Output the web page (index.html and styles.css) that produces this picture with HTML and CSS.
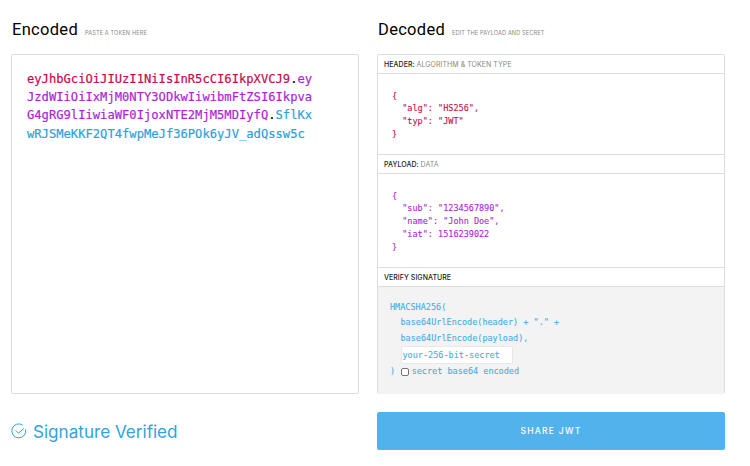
FILE: index.html
```html
<!DOCTYPE html>
<html lang="en">
<head>
<meta charset="utf-8">
<title>JWT Debugger</title>
<link rel="stylesheet" href="styles.css">
</head>
<body>
<main class="grid">
  <section class="col">
    <header class="head"><h2>Encoded</h2><small>PASTE A TOKEN HERE</small></header>
    <div class="box encoded"><span class="red">eyJhbGciOiJIUzI1NiIsInR5cCI6IkpXVCJ9</span>.<span class="purple">eyJzdWIiOiIxMjM0NTY3ODkwIiwibmFtZSI6IkpvaG4gRG9lIiwiaWF0IjoxNTE2MjM5MDIyfQ</span>.<span class="blue">SflKxwRJSMeKKF2QT4fwpMeJf36POk6yJV_adQssw5c</span></div>
  </section>
  <section class="col">
    <header class="head"><h2>Decoded</h2><small>EDIT THE PAYLOAD AND SECRET</small></header>
    <div class="box decoded">
      <div class="label">HEADER: <span>ALGORITHM &amp; TOKEN TYPE</span></div>
      <pre class="code red code-h">{
  "alg": "HS256",
  "typ": "JWT"
}</pre>
      <div class="label">PAYLOAD: <span>DATA</span></div>
      <pre class="code purple code-p">{
  "sub": "1234567890",
  "name": "John Doe",
  "iat": 1516239022
}</pre>
      <div class="label">VERIFY SIGNATURE</div>
      <div class="verify">
        <div>HMACSHA256(</div>
        <div class="ind">base64UrlEncode(header) + "." +</div>
        <div class="ind">base64UrlEncode(payload),</div>
        <div class="ind"><span class="secret">your-256-bit-secret</span></div>
        <div class="check-row"><span>)</span><span class="check"></span><span>secret base64 encoded</span></div>
      </div>
    </div>
  </section>
  <div class="status">
    <svg class="status-icon" viewBox="0 0 16 16" width="16" height="16" aria-hidden="true"><path d="M14.6 6.2A7 7 0 1 1 11.6 2" fill="none" stroke="#2fa3df" stroke-width="1"/><path d="M4.8 7.6l2.6 2.6 5.6-4.8" fill="none" stroke="#2fa3df" stroke-width="1"/></svg>
    <span>Signature Verified</span>
  </div>
  <button class="share">SHARE JWT</button>
</main>
</body>
</html>
```
FILE: styles.css
```css
* { box-sizing: border-box; }
html, body { margin: 0; padding: 0; background: #fff; }
body { width: 750px; height: 466px; overflow: hidden; font-family: Inter, "Liberation Sans", sans-serif; }
.grid {
  display: grid;
  grid-template-columns: 348px 348px;
  column-gap: 18px;
  padding: 18px 0 0 11px;
}
.col { display: flex; flex-direction: column; }
.head { display: flex; align-items: baseline; gap: 7px; height: 36px; padding: 2px 0 0 1px; }
.head h2 { margin: 0; font-size: 16.5px; font-weight: 400; color: #000; line-height: 20px; font-family: Roboto, sans-serif; letter-spacing: .3px; }
.head small { font-size: 5.6px; color: #888; letter-spacing: .12px; }
.box { height: 340px; border: 1px solid #ddd; border-radius: 2px; background: #fff; }
.encoded {
  padding: 15px 40px 0 15px;
  font: 12.15px/18.2px "DejaVu Sans Mono", monospace;
  -webkit-text-stroke: .2px;
  word-break: break-all;
  color: #000;
}
.red { color: #c70a4f; }
.purple { color: #ae1fd6; }
.blue { color: #2d9fdc; }
.label { height: 19px; padding: 1px 6px 0; font-size: 7px; line-height: 18px; color: #222; font-weight: 500; letter-spacing: .05px; border-bottom: 1px solid #ddd; }
.label span { color: #888; font-weight: 400; }
.code { margin: 0; padding: 15.5px 0 0 14px; font: 8.5px/12.8px "DejaVu Sans Mono", monospace; -webkit-text-stroke: .1px; border-bottom: 1px solid #ddd; }
.code-h { height: 81px; }
.code-p { height: 94px; }
.verify {
  height: 107px;
  padding: 13px 12px 0;
  background: #f3f3f3;
  color: #45adea;
  font: 8.5px/15.3px "DejaVu Sans Mono", monospace;
  -webkit-text-stroke: .1px;
}
.ind { padding-left: 10.5px; }
.secret {
  display: inline-block;
  width: 112px;
  height: 18px;
  padding-left: 1px;
  background: #fff;
  border: 1px solid #e8e8e8;
  border-radius: 2px;
  line-height: 16px;
}
.check-row { display: flex; align-items: center; }
.check {
  width: 8px;
  height: 8px;
  margin: 0 3px 0 5.5px;
  background: #fff;
  border: 1px solid #767676;
  border-radius: 2px;
}
.status { display: flex; align-items: center; gap: 6px; height: 38px; margin-top: 18px; color: #2fa3df; font-size: 17.1px; }
.status-icon { flex: none; }
.share {
  height: 38px;
  margin-top: 18px;
  border: 0;
  border-radius: 2px;
  background: #52b3ec;
  color: #fff;
  font: 500 8.5px Inter, sans-serif;
  letter-spacing: 1.25px;
}
```
